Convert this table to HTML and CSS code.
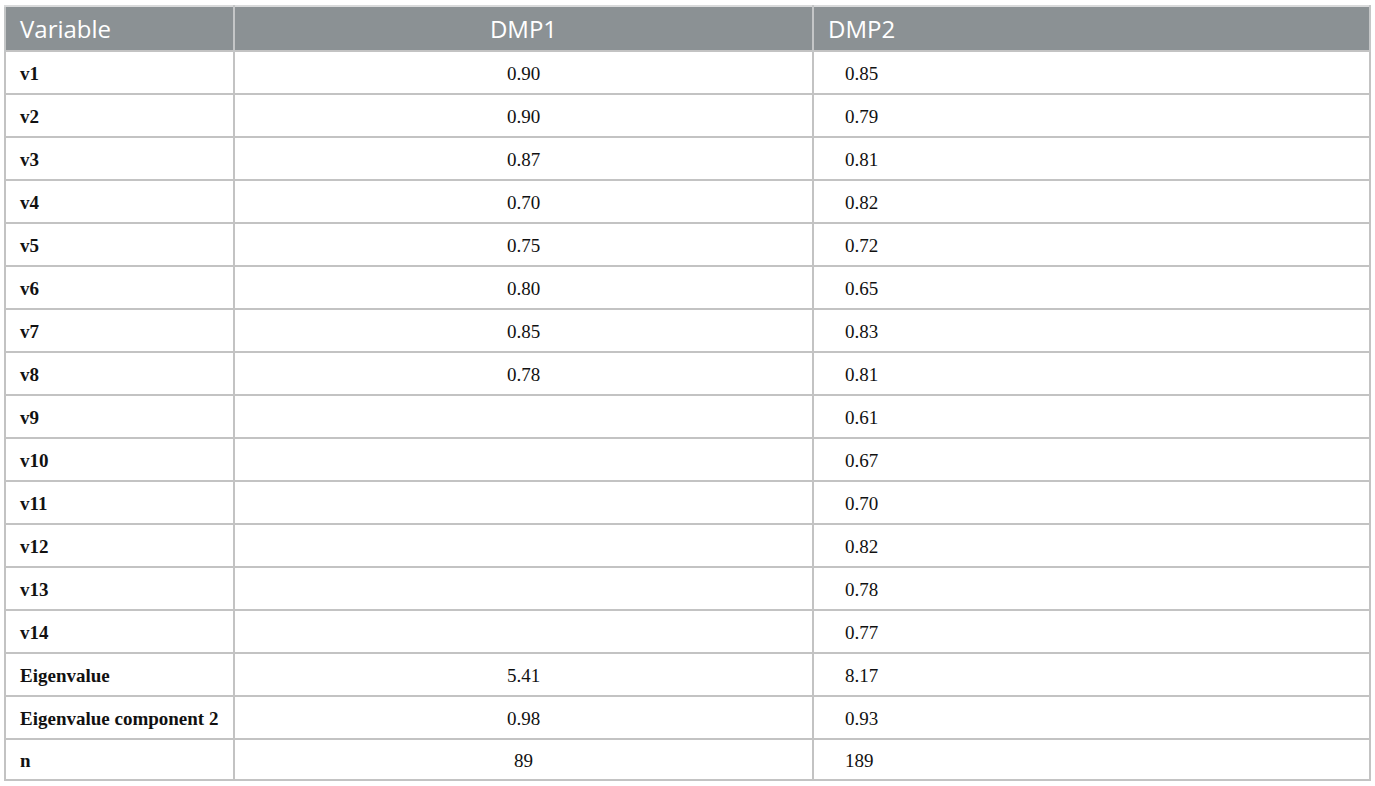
FILE: index.html
```html
<!DOCTYPE html>
<html>
<head>
<meta charset="utf-8">
<link rel="stylesheet" href="styles.css">
</head>
<body>
<table class="data">
  <colgroup>
    <col class="c1"><col class="c2"><col class="c3">
  </colgroup>
  <thead>
    <tr><th class="h-left">Variable</th><th class="h-center">DMP1</th><th class="h-left">DMP2</th></tr>
  </thead>
  <tbody>
    <tr><td class="lab">v1</td><td class="mid">0.90</td><td class="right">0.85</td></tr>
    <tr><td class="lab">v2</td><td class="mid">0.90</td><td class="right">0.79</td></tr>
    <tr><td class="lab">v3</td><td class="mid">0.87</td><td class="right">0.81</td></tr>
    <tr><td class="lab">v4</td><td class="mid">0.70</td><td class="right">0.82</td></tr>
    <tr><td class="lab">v5</td><td class="mid">0.75</td><td class="right">0.72</td></tr>
    <tr><td class="lab">v6</td><td class="mid">0.80</td><td class="right">0.65</td></tr>
    <tr><td class="lab">v7</td><td class="mid">0.85</td><td class="right">0.83</td></tr>
    <tr><td class="lab">v8</td><td class="mid">0.78</td><td class="right">0.81</td></tr>
    <tr><td class="lab">v9</td><td class="mid"></td><td class="right">0.61</td></tr>
    <tr><td class="lab">v10</td><td class="mid"></td><td class="right">0.67</td></tr>
    <tr><td class="lab">v11</td><td class="mid"></td><td class="right">0.70</td></tr>
    <tr><td class="lab">v12</td><td class="mid"></td><td class="right">0.82</td></tr>
    <tr><td class="lab">v13</td><td class="mid"></td><td class="right">0.78</td></tr>
    <tr><td class="lab">v14</td><td class="mid"></td><td class="right">0.77</td></tr>
    <tr><td class="lab">Eigenvalue</td><td class="mid">5.41</td><td class="right">8.17</td></tr>
    <tr><td class="lab">Eigenvalue component 2</td><td class="mid">0.98</td><td class="right">0.93</td></tr>
    <tr class="last"><td class="lab">n</td><td class="mid">89</td><td class="right">189</td></tr>
  </tbody>
</table>
</body>
</html>
```

FILE: styles.css
```css
html, body {
  margin: 0;
  padding: 0;
  background: #ffffff;
}

.data {
  margin: 5px 0 0 4px;
  width: 1365px;
  border-collapse: collapse;
  table-layout: fixed;
  font-family: "Liberation Serif", "Times New Roman", serif;
  color: #111111;
}

.c1 { width: 229px; }
.c2 { width: 579px; }
.c3 { width: 557px; }

.data th {
  background: #8b9194;
  color: #ffffff;
  font-family: "Open Sans", "Noto Sans", sans-serif;
  font-weight: 400;
  font-size: 24px;
  height: 45px;
  padding: 0;
  border: 2px solid #c4c6c7;
  border-bottom: 1px solid #b7babc;
  border-top: 2px solid #d9dadb;
  box-sizing: border-box;
  vertical-align: middle;
}

.data th.h-left {
  text-align: left;
  padding-left: 14px;
}

.data th.h-center {
  text-align: center;
}

.data td {
  height: 43px;
  padding: 3px 0 0 0;
  border: 2px solid #c3c3c3;
  box-sizing: border-box;
  font-size: 19px;
  vertical-align: middle;
}

.data tr.last td {
  height: 41px;
}

.data td.lab {
  font-weight: 700;
  padding-left: 14px;
}

.data td.mid {
  text-align: center;
}

.data td.right {
  text-align: left;
  padding-left: 31px;
}
```
